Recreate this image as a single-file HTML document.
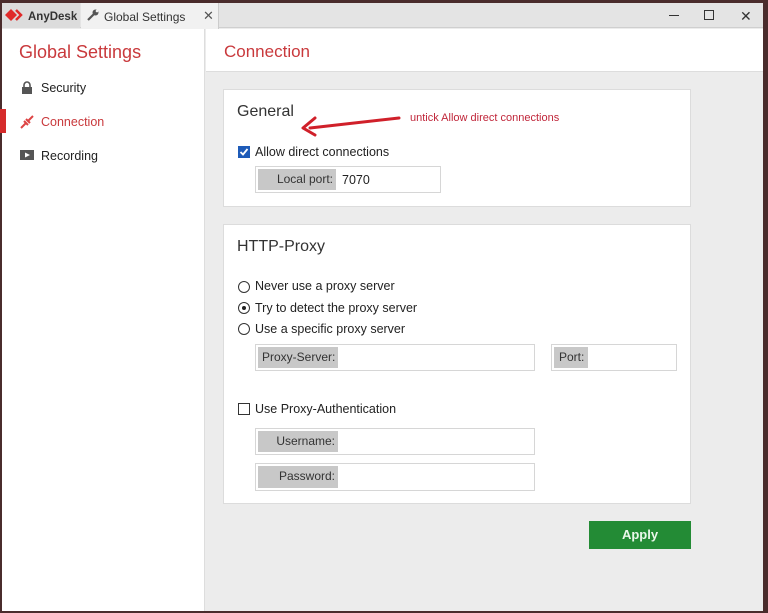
<!DOCTYPE html>
<html><head><meta charset="utf-8"><style>
*{margin:0;padding:0;box-sizing:border-box}
body{width:768px;height:613px;position:relative;overflow:hidden;background:#4a2c2c;font-family:"Liberation Sans",sans-serif;color:#222}
.a{position:absolute}
.t{position:absolute;white-space:nowrap;font-size:12.5px;line-height:16px}
.box{position:absolute;background:#fff;border:1px solid #dcdcdc}
.fld{position:absolute;background:#fff;border:1px solid #d6d6d6}
.lbl{position:absolute;left:2px;top:2px;bottom:2px;background:#c8c8c8;font-size:12px;line-height:21px;color:#333;text-align:right;padding-right:3px;white-space:nowrap;overflow:hidden}
.rad{position:absolute;width:12px;height:12px;border:1px solid #333;border-radius:50%;background:#fff}
</style></head><body>
<div class="a" style="left:2px;top:3px;width:761px;height:608px;background:#ececec"></div>
<div class="a" style="left:2px;top:3px;width:761px;height:25px;background:#e4e4e4;border-bottom:1px solid #cfcfcf"></div>
<div class="a" style="left:2px;top:3px;width:78px;height:25px;background:#dcdcdc"></div>
<div class="a" style="left:81px;top:3px;width:138px;height:26px;background:#f1f1f1;border-right:1px solid #ccc"></div>
<svg class="a" style="left:4px;top:8px" width="22" height="14" viewBox="0 0 22 14"><path d="M1 7L7 1L13 7L7 13Z" fill="#e02a2a"/><path d="M12 2L17 7L12 12" stroke="#e02a2a" stroke-width="2.5" fill="none"/></svg>
<div class="t" style="left:28px;top:9px;font-size:11.5px;font-weight:bold;color:#333">AnyDesk</div>
<svg class="a" style="left:87px;top:9px" width="12" height="12" viewBox="0 0 12 12"><path d="M1 11L7 5" stroke="#555" stroke-width="2.2"/><circle cx="8.5" cy="3.5" r="3" fill="#555"/><circle cx="10" cy="2" r="1.3" fill="#f1f1f1"/></svg>
<div class="t" style="left:104px;top:9px;font-size:12px;color:#333">Global Settings</div>
<div class="t" style="left:203px;top:8px;font-size:13px;color:#555">✕</div>
<div class="a" style="left:669px;top:15px;width:10px;height:1px;background:#333"></div>
<div class="a" style="left:704px;top:10px;width:10px;height:10px;border:1px solid #333"></div>
<div class="t" style="left:740px;top:8px;font-size:14px;color:#333">✕</div>
<div class="a" style="left:2px;top:29px;width:203px;height:582px;background:#fff;border-right:1px solid #ddd"></div>
<div class="t" style="left:19px;top:42px;font-size:18px;line-height:20px;color:#c9393c">Global Settings</div>
<svg class="a" style="left:21px;top:81px" width="12" height="14" viewBox="0 0 12 14"><path d="M3 6V4a3 3 0 0 1 6 0v2" stroke="#555" stroke-width="1.6" fill="none"/><rect x="1" y="6" width="10" height="7" fill="#555"/></svg>
<div class="t" style="left:41px;top:80px">Security</div>
<div class="a" style="left:0;top:109px;width:6px;height:24px;background:#d52b2b"></div>
<svg class="a" style="left:20px;top:115px" width="14" height="14" viewBox="0 0 14 14"><path d="M1 13L6 8M8 6L13 1M4 6L8 10M6 4L10 8" stroke="#d44" stroke-width="2"/></svg>
<div class="t" style="left:41px;top:114px;color:#c9393c">Connection</div>
<svg class="a" style="left:20px;top:150px" width="14" height="12" viewBox="0 0 14 12"><rect x="0" y="0" width="14" height="10" fill="#555"/><path d="M5 2.5L10 5L5 7.5Z" fill="#fff"/></svg>
<div class="t" style="left:41px;top:148px">Recording</div>
<div class="a" style="left:206px;top:29px;width:557px;height:43px;background:#fff;border-bottom:1px solid #ddd"></div>
<div class="t" style="left:224px;top:42px;font-size:17px;line-height:20px;color:#c9393c">Connection</div>
<div class="box" style="left:223px;top:89px;width:468px;height:118px"></div>
<div class="t" style="left:237px;top:103px;font-size:16px;line-height:18px;color:#333">General</div>
<svg class="a" style="left:298px;top:112px" width="106" height="26" viewBox="0 0 106 26"><path d="M101 6L12 16" stroke="#d0202a" stroke-width="3" stroke-linecap="round"/><path d="M17 6L5 16L17 23" stroke="#d0202a" stroke-width="3" fill="none" stroke-linecap="round" stroke-linejoin="round"/></svg>
<div class="t" style="left:410px;top:110px;font-size:11px;color:#c0263a">untick Allow direct connections</div>
<div class="a" style="left:238px;top:146px;width:12px;height:12px;background:#1e5bb8"></div>
<svg class="a" style="left:238px;top:146px" width="12" height="12" viewBox="0 0 12 12"><path d="M2.5 6L5 8.5L9.5 3" stroke="#fff" stroke-width="1.8" fill="none"/></svg>
<div class="t" style="left:255px;top:144px">Allow direct connections</div>
<div class="fld" style="left:255px;top:166px;width:186px;height:27px"><div class="lbl" style="width:78px">Local port:</div><div class="t" style="left:86px;top:5px">7070</div></div>
<div class="box" style="left:223px;top:224px;width:468px;height:280px"></div>
<div class="t" style="left:237px;top:238px;font-size:16px;line-height:18px;color:#333">HTTP-Proxy</div>
<div class="rad" style="left:238px;top:281px"></div>
<div class="t" style="left:255px;top:278px">Never use a proxy server</div>
<div class="rad" style="left:238px;top:302px"><div class="a" style="left:3px;top:3px;width:4px;height:4px;border-radius:50%;background:#222"></div></div>
<div class="t" style="left:255px;top:300px">Try to detect the proxy server</div>
<div class="rad" style="left:238px;top:323px"></div>
<div class="t" style="left:255px;top:321px">Use a specific proxy server</div>
<div class="fld" style="left:255px;top:344px;width:280px;height:27px"><div class="lbl" style="width:80px;text-align:left;padding-left:4px">Proxy-Server:</div></div>
<div class="fld" style="left:551px;top:344px;width:126px;height:27px"><div class="lbl" style="width:34px;text-align:left;padding-left:5px">Port:</div></div>
<div class="a" style="left:238px;top:403px;width:12px;height:12px;border:1px solid #333;background:#fff"></div>
<div class="t" style="left:255px;top:401px">Use Proxy-Authentication</div>
<div class="fld" style="left:255px;top:428px;width:280px;height:27px"><div class="lbl" style="width:80px">Username:</div></div>
<div class="fld" style="left:255px;top:463px;width:280px;height:28px"><div class="lbl" style="width:80px">Password:</div></div>
<div class="a" style="left:589px;top:521px;width:102px;height:28px;background:#238b35;color:#eaf7ea;font-weight:bold;font-size:13px;line-height:28px;text-align:center">Apply</div>
</body></html>
